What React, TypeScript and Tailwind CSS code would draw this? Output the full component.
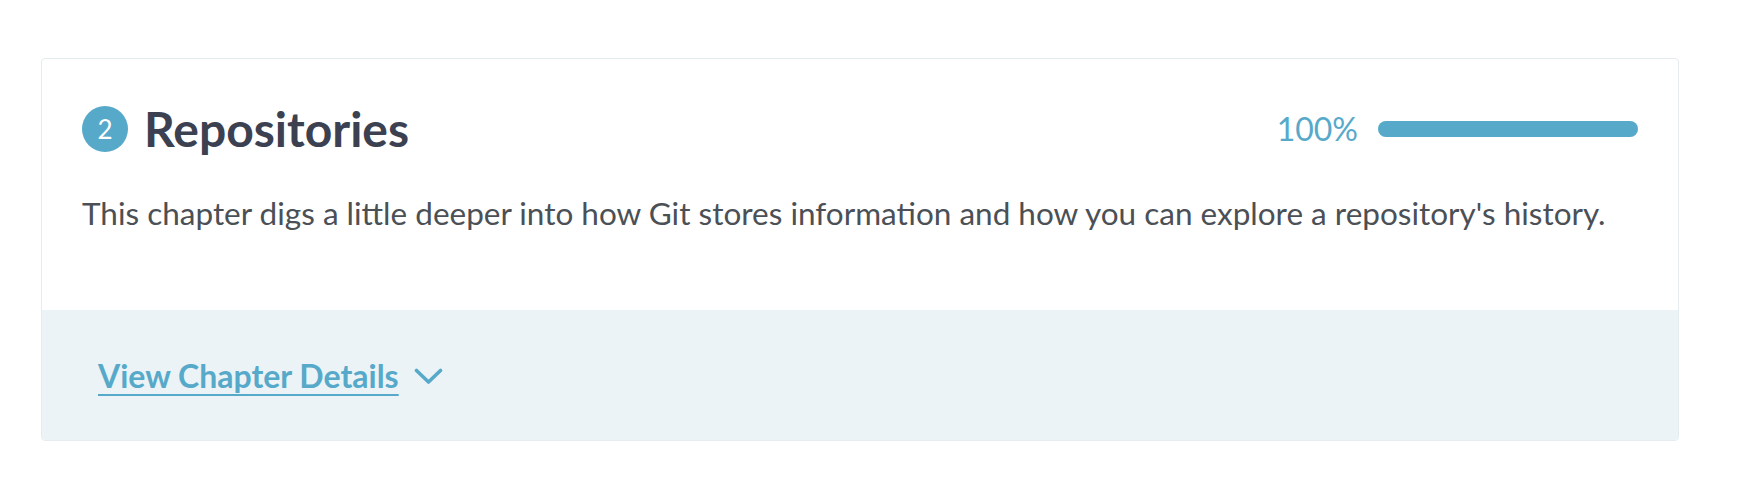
const ChapterCard = () => {
  return (
    <div className="ml-[41px] w-[1638px] rounded-[4px] border border-[#e4ecf0] bg-white overflow-hidden">
      {/* Header + description */}
      <div className="pl-[40px] pr-[40px] pt-[47px] pb-[73px]">
        <div className="flex h-[46px] items-center justify-between">
          <div className="flex items-center">
            <span className="flex h-[46px] w-[46px] items-center justify-center rounded-full bg-[#57a9ca] text-[26px] leading-none text-white">
              2
            </span>
            <h2 className="ml-[16px] text-[48px] font-bold leading-none text-[#3c4151]">Repositories</h2>
          </div>
          <div className="flex items-center">
            <span className="text-[32px] leading-none text-[#57a9ca]">100%</span>
            <div className="ml-[20px] h-[16px] w-[260px] rounded-full bg-[#e6eef2]">
              <div className="h-full rounded-full bg-[#57a9ca]" style={{ width: "100%" }} />
            </div>
          </div>
        </div>
        <p className="mt-[37px] text-[31.5px] leading-[48px] text-[#4b5056]">
          This chapter digs a little deeper into how Git stores information and how you can explore a repository's history.
        </p>
      </div>

      {/* Details toggle */}
      <div className="bg-[#ebf3f6] px-[56px] pt-[42px] pb-[40px]">
        <a href="#" className="inline-flex items-center text-[#57a9ca]">
          <span className="text-[32px] font-bold leading-[48px] underline decoration-2 underline-offset-[6px]">
            View Chapter Details
          </span>
          <svg className="ml-[15px]" width="29" height="17" viewBox="0 0 29 17" fill="none">
            <polyline points="2.5,2.5 14.5,14 26.5,2.5" stroke="currentColor" strokeWidth="3.6" strokeLinecap="round" strokeLinejoin="round" />
          </svg>
        </a>
      </div>
    </div>
  );
};

export default function App() {
  return (
    <div className="h-[494px] w-[1740px] bg-white pt-[58px]" style={{ fontFamily: "Lato, 'Liberation Sans', sans-serif" }}>
      <ChapterCard />
    </div>
  );
}
